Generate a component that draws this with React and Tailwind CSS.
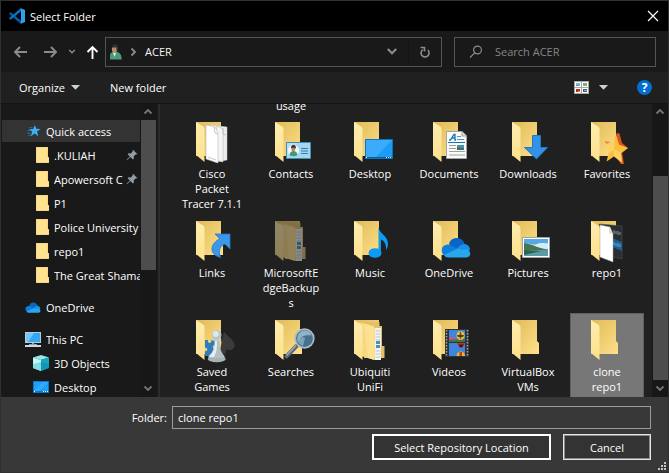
import React from "react";

const FONT = "font-['Open_Sans','Noto_Sans',sans-serif]";

function Chevron({ dir = "down", className = "h-[10px] w-[10px]" }) {
  const d = { down: "M1.5 2.5 5 6l3.5-3.5", up: "M1.5 6.5 5 3l3.5 3.5", right: "M3.5 1.5 7 5 3.5 8.5" }[dir];
  return (
    <svg className={className} viewBox="0 0 10 10" fill="none" stroke="currentColor" strokeWidth="1.8">
      <path d={d} />
    </svg>
  );
}

function Arrow({ dir }) {
  const d = {
    left: "M14 7H2M7 2 2 7l5 5",
    right: "M1 7h12M8 2l5 5-5 5",
    up: "M7.500 14V2M2.500 7l5-5 5 5",
  }[dir];
  return (
    <svg className="h-[14px] w-[15px]" viewBox="0 0 15 14" fill="none" stroke="currentColor" strokeWidth="1.9">
      <path d={d} />
    </svg>
  );
}

function CodeLogo() {
  return (
    <svg className="h-4 w-4" viewBox="0 0 16 16">
      <path d="M.3 5.2 1.600 4.200 12 12.800V15.900L.4 6z" fill="#0065a9" />
      <path d="M.3 10.800 1.600 11.800 12 3.200V.1L.4 10z" fill="#007acc" />
      <path d="M11.400.1 16 2v12l-4.600 1.900c.4-.3.6-.7.6-1.200V1.300c0-.5-.2-.9-.6-1.200z" fill="#2da0ee" />
    </svg>
  );
}

function PersonIcon() {
  return (
    <svg className="h-4 w-[14px]" viewBox="0 0 14 16">
      <path d="M1 15.500V11c0-2 2-3 3.500-3.300L8 8c2.500.5 4.500 2 4.700 7.500z" fill="#4a9b78" />
      <path d="M4 8.500 5.500 13l1.500-4z" fill="#e8eeea" />
      <ellipse cx="5.600" cy="5.200" rx="2.700" ry="3.600" fill="#b98d6c" />
      <path d="M2.800 4C2.600 1.500 4.300.2 6.300.2s3.400 1.600 2.500 5c-.3 1-.8 1.500-1.200 1.700L7.300 3.300C5.500 3.700 4 3.200 2.800 4z" fill="#2f2f31" />
    </svg>
  );
}

function Caret() {
  return (
    <svg className="h-[5px] w-[9px]" viewBox="0 0 9 5" fill="#d0d0d0">
      <path d="M0 0h9L4.500 4.700z" />
    </svg>
  );
}

function ViewIcon() {
  return (
    <svg className="h-[13px] w-[15px]" viewBox="0 0 15 13">
      <path fill="#a7a7a7" d="M0 0h15v13H0z" />
      <path fill="#fff" d="M1 1h6v5H1zM8 1h6v5H8zM1 7h6v5H1zM8 7h6v5H8z" />
      <path fill="#7db8dc" d="M2 2h4v3H2z" /><path fill="#46a46a" d="M2 4h2v1H2z" />
      <path fill="#7bb56c" d="M9 2h4v3H9z" /><path fill="#709bd1" d="M9 2h2v1H9z" />
      <path fill="#b82717" d="M2 8h4v3H2z" /><path fill="#ed9334" d="M4 10h2v1H4z" />
      <path fill="#2d5eac" d="M9 8h4v3H9z" /><path fill="#c7b12d" d="M10 9h3v1h-3z" />
    </svg>
  );
}

function SmallFolder() {
  return (
    <svg className="h-4 w-[13px]" viewBox="0 0 13 16">
      <path d="M0 0h12v10h1v6H0z" fill="#f0cf66" />
      <path d="M.5.500h11V11l-.8 1v3.500H.5z" fill="#ffe391" />
      <path d="M10.800 15.500V12l.7-1h1v4.500z" fill="#ffe9a6" />
    </svg>
  );
}

function QuickStar() {
  return (
    <svg className="h-[14px] w-[14px]" viewBox="0 0 15 14">
      <path d="m8.500.5 1.400 4.200 4.600.1-3.700 2.700L12 12.500 8.200 9.800 4 12.900l1.600-4.800L2.300 5l4.300-.2z" fill="#39b0f5" />
      <path d="M2 3.500h4M.5 6.500h4M0 9.500h4.500M1.500 11.800H4" stroke="#2277ad" strokeWidth="1" />
    </svg>
  );
}

function Pin() {
  return (
    <svg className="h-3 w-3 shrink-0" viewBox="0 0 12 12">
      <path d="m7 .8 4.300 4.300-1 .5-.6-.2-1.900 1.900.1 2.200-.9.9L4.400 7.900 1 11.200l-.4-.4L3.900 7.500 1.700 5.200l.9-.9 2.200.1 1.900-1.900-.2-.7z" fill="#929ca3" />
    </svg>
  );
}

function CloudShape() {
  return (
    <>
      <path d="M8 7c1-4 4-6 8-6 4 0 6.500 2.500 7.500 6L15 15z" fill="#0a66c2" />
      <path d="M3.500 18.500C-.5 15.500-.5 9 5.500 7.800c1-.4 3-.4 4.500.4L18 12.500 8 20z" fill="#0f7fdd" />
      <path d="M16 12c2-3.500 5-5 7.500-5 4 .5 5.500 3.500 5.500 6l-5 3z" fill="#1690e8" />
      <path d="M3 18 17 11.500c3 .8 5 2 8 .8 5 .5 6 7.700.5 8.200H7c-2 0-3-.8-4-2.500z" fill="#28a8ea" />
    </>
  );
}

function OneDriveSmall() {
  return (
    <svg className="h-[11px] w-4" viewBox="0 0 30 21"><CloudShape /></svg>
  );
}

function PcIcon() {
  return (
    <svg className="h-[15px] w-4" viewBox="0 0 16 15">
      <path fill="#b9cbd6" d="M0 0h16v11H0z" />
      <path fill="#34a7f2" d="M1 1h14v9H1z" />
      <path fill="#73c6fb" d="M1 1h8L3 10H1z" />
      <path fill="#92a4b1" d="M7 11h2v1H7zM4 12h8v1H4z" />
      <path fill="#cfd8de" d="M0 13h16v2H0z" />
    </svg>
  );
}

function CubeIcon() {
  return (
    <svg className="h-4 w-4" viewBox="0 0 16 16">
      <path fill="#8fe8ef" d="m8 0 8 2.500L8 5 0 2.500z" />
      <path fill="#c8f6f4" d="m0 2.500 8 2.500v11l-8-3z" />
      <path fill="#7fe0e4" d="m0 9 8-2v9l-8-3z" />
      <path fill="#18a5c0" d="M16 2.500 8 5v11l8-3z" />
      <path fill="#0e8aa8" d="m16 9-8-2v9l8-3z" opacity=".5" />
    </svg>
  );
}

function DesktopSmall() {
  return (
    <svg className="h-[12px] w-4" viewBox="0 0 16 12">
      <path fill="#0978cf" d="M0 0h16v12H0z" />
      <path fill="#1ea0fb" d="M1 1h14v9H1z" />
      <path fill="#4cb5fc" d="M1 10 10 1h5L6 10z" opacity=".5" />
      <path fill="#fff" d="M1 10h1v1H1zM10 10h1v1h-1zM12 10h1v1h-1zM14 10h1v1h-1z" />
    </svg>
  );
}

const overlays = {
  papers: (
    <>
      <path d="m22 7 17 2v33l-12 2z" fill="#ececec" stroke="#c9c9c9" strokeWidth=".5" />
      <path d="m29 8 6 3v33l-12-3z" fill="#f5f5f5" stroke="#bdbdbd" strokeWidth=".6" />
      <path d="m18 7 9 2 3 6v30l-12-4z" fill="#fff" stroke="#bbb" strokeWidth=".6" />
      <path d="m26 9 1 6 3 1M35 10v6l3 1M20 39l8 3" fill="none" stroke="#b0b0b0" strokeWidth=".7" />
    </>
  ),
  contacts: (
    <>
      <path d="M19.500 24.500h24v16h-24z" fill="#b5def5" stroke="#3f8fb5" />
      <path d="m30 25 13 0v15H20z" fill="#9dcfeb" opacity=".6" />
      <circle cx="26.500" cy="32.500" r="5.500" fill="#f3f8f6" />
      <path d="M22.500 37c.3-3 2-4 4-4s3.700 1 4 4c-2 1.600-6 1.600-8 0z" fill="#3d9c75" />
      <ellipse cx="26.300" cy="31" rx="1.900" ry="2.400" fill="#b98261" />
      <path d="M24 30c0-2 1-3 2.600-3s2.900 1.400 2 4l-1-1.500z" fill="#3b2a22" />
      <path d="M34 30.500h7M34 33h7M34 35.500h7" stroke="#317da6" />
    </>
  ),
  desktop: (
    <>
      <path d="M19.500 21.500h27v19h-27z" fill="#1b9cf7" stroke="#0b73c2" />
      <path d="M20 22h26L30 39H20z" fill="#55b9ff" opacity=".55" />
      <path d="M20 39h26v1H20z" fill="#0c5c9c" />
      <path d="M20 39h1v1h-1zM40 39h1v1h-1zM42 39h1v1h-1zM44 39h1v1h-1z" fill="#fff" />
    </>
  ),
  documents: (
    <>
      <path d="M21.500 13.500H37l4.500 4.500v22.500h-20z" fill="#fafafa" stroke="#a5a5a5" />
      <path d="M37 13.500V18h4.500" fill="#e3e3e3" stroke="#9b9b9b" />
      <path d="M24 22h1.500l3.500-5.500h1V22h1M26.500 20H30" fill="none" stroke="#1477b8" strokeWidth="1.300" />
      <path d="M32 18.500h4M32 21.500h7" stroke="#4b96c6" />
      <path d="M23 24.500h17" stroke="#1477b8" />
      <path d="M24 27.500h7M24 30.500h7M24 33.500h16M24 37h16" stroke="#a0a0a0" />
      <path d="M32 27h7v5h-7z" fill="#4b8fc0" /><path d="m32 29 7 1.500V32h-7z" fill="#3c7848" />
    </>
  ),
  downloads: (
    <path d="M28.500 17.500h8v12h7L32.500 41 20.500 29.500h8z" fill="#3193e8" stroke="#1f78c8" />
  ),
  favorites: (
    <>
      <path d="m33.500 15 3 .5 2.500 9.500 6 5-6 4 2 12h-3l-6-9z" fill="#d9551e" />
      <path d="m33 16 3 10.500 9 3.500-7 5.500L39 45l-8-6.500-7.500 5L26 34l-5-6.500 8-1z" fill="#fbbf3d" />
      <path d="m32 18-1 14-5 3-5-7.500 8-1zM31 31l7 4 1 9-8-6z" fill="#ffd977" opacity=".7" />
      <path d="m21.500 23 6 1-4 2z" fill="#f0803a" />
    </>
  ),
  links: (
    <path d="M27 17h15v15l-5-5c-5 2-7 6-4.500 13.500C26 39 23.500 35 24 31c.5-4 4-7 7.500-9.500z" fill="#3b97e8" stroke="#2379c7" strokeWidth=".8" />
  ),
  backup: (
    <>
      <path d="M17 6h16.500v4H36v20h2.500v12H18z" fill="#e3c068" />
      <path d="M28.500 12H35v32h-6.500z" fill="#f2f2f2" />
      <path d="M29.500 15h5M29.500 18h5M29.500 21h5M29.500 24h5M29.500 35h5M29.500 38h5M29.500 41h5" stroke="#bac6cf" />
      <path d="M30 25h4v3h-4zM30 29h4v3h-4z" fill="#4790bb" />
      <path d="m13 6 13.500 4c1.500.5 2 1 2 2.500V44L15 40z" fill="#f7d780" />
      <path d="m18 7.500 8.500 2.500c1.500.5 2 1 2 2.500V44L22 42z" fill="#ffe192" />
    </>
  ),
  music: (
    <>
      <path d="M32.500 10c1 7 9.500 8.500 9.500 17 0 2.500-.8 4.500-2 6 .5-6-2-9.500-5-10.500V36h-2.500z" fill="#0b9bf2" />
      <ellipse cx="29" cy="36" rx="6.500" ry="4.800" fill="#0b9bf2" />
    </>
  ),
  onedrive: <g transform="translate(16 20)"><CloudShape /></g>,
  pictures: (
    <>
      <path d="M18.500 20.500h27v20h-27z" fill="#fff" stroke="#9ba5ab" />
      <path d="M20 22h24v17H20z" fill="#59a8e4" />
      <path d="M20 27c5-2 9 2 13 0s8 0 11-1v6H20z" fill="#d5ebf7" />
      <path d="M20 26c8 1 14 5 21 6l3 1H20z" fill="#45764f" />
      <path d="M20 33h24v6H20z" fill="#5a9ca1" /><path d="m20 33 17 1-17 4z" fill="#315f52" />
    </>
  ),
  repo: (
    <>
      <path d="m16 7 23 2v33l-12-3z" fill="#292e33" stroke="#4b5054" strokeWidth=".6" />
      <path d="m29 21 10 4v9l-10-4z" fill="#1d5f91" />
      <path d="M31 13v4M33 14v3M35 14v4M37 15v3" stroke="#8b9297" />
      <path d="M31 25v3M33 26v3M35 26v4M37 27v3" stroke="#60a8d8" />
      <path d="m17 8 10 2 3 7v28l-13-5z" fill="#fff" stroke="#aaa" strokeWidth=".5" />
      <path d="M26 10v6l4 2z" fill="#e2dfc8" />
    </>
  ),
  games: (
    <>
      <path d="M36 15.500c2 4 10.500 8 10.500 13.500 0 5-5 6.500-8 4l-1 5h-6l2-12z" fill="#3b3b3c" />
      <path d="M17 24h3c-1 4 4 4 3.500 0H27v5c-3 0-3 4 0 4v7H17v-5c3 1 3-4 0-3z" fill="#2d7dbd" />
      <ellipse cx="28.700" cy="43" rx="9" ry="3.300" fill="#a7b2b7" />
      <path d="M26.500 25h5c0 6 1 11 5 15v2h-16v-2c5-4 6-9 6-15z" fill="#b4bfc4" />
      <path d="M27 25h2c0 6 0 11-3 16h-4.500v-1C26 36 27 31 27 25z" fill="#e8edef" />
      <ellipse cx="29" cy="24" rx="4.500" ry="1.300" fill="#c7d0d4" />
      <circle cx="28.700" cy="19" r="4.800" fill="#b9c3c8" />
      <circle cx="27.700" cy="18" r="3" fill="#e1e7e9" />
    </>
  ),
  searches: (
    <>
      <path d="M29.500 30 19.500 40.500" stroke="#556875" strokeWidth="4" strokeLinecap="round" />
      <path d="M29 29.500 19.500 39.500" stroke="#9cabb4" strokeWidth="1.500" />
      <circle cx="37.500" cy="22.500" r="9.300" fill="#47718e" stroke="#a9bdc6" strokeWidth="1.700" />
      <path d="M30.500 25c-1-6 2-10 7-10.500 3 0 6 1 7 5-5-1-10 0-14 5.500z" fill="#90b3c7" />
      <path d="M30 24c1 3 3 5 6 6l2-8-3-1z" fill="#b6d5dd" opacity=".5" />
    </>
  ),
  videos: (
    <>
      <path d="M20 13h24v28H20z" fill="#303234" />
      <path d="M21.500 14v27M42.500 14v27" stroke="#a0a5a7" strokeWidth="1.500" strokeDasharray="1.500 1.500" />
      <path d="M24 14h16v12H24zM24 27h16v13H24z" fill="#3d86df" />
      <path d="M24 22c2-2 4-1 5 0s3 1 5 1h6v3H24z" fill="#c8538d" />
      <path d="M24 24c4-1 10 0 16-1v3H24z" fill="#3b7548" />
      <ellipse cx="35.500" cy="19.500" rx="4" ry="4.500" fill="#ecc32a" />
      <path d="M35.500 15c-1.500 2-1.500 6 0 9 1.500-3 1.500-7 0-9z" fill="#c6302d" />
      <path d="M32 19h7l-1 2h-5z" fill="#1d4f3b" />
      <path d="M32 27h8l-2.500 5h-3z" fill="#c82f2d" /><path d="M33.500 28.500H39L37 31h-2z" fill="#20252a" />
      <path d="M31.500 40c0-6 8.500-6 8.500 0z" fill="#e6bc24" /><path d="M34.500 36h2.500v4h-2.500z" fill="#ce352a" />
    </>
  ),
};

function FolderArt({ kind, faded }) {
  const behindFlap = kind === "papers" || kind === "repo" || kind === "backup";
  return (
    <svg className={`mx-auto h-12 w-12 ${faded ? "opacity-50" : ""}`} viewBox="0 0 48 48">
      <defs>
        <linearGradient id="folderBack" x1="0" y1="0" x2="1" y2="1">
          <stop offset="0" stopColor="#dfba57" />
          <stop offset="1" stopColor="#ffe08a" />
        </linearGradient>
        <linearGradient id="folderFlap" x1="0" y1="0" x2="0" y2="1">
          <stop offset="0" stopColor="#ffedb0" />
          <stop offset="1" stopColor="#fde08a" />
        </linearGradient>
      </defs>
      <path d="M8 4h25v21l2 2v11H8z" fill="url(#folderBack)" />
      {behindFlap && overlays[kind]}
      <path d="m8 4 7 4.500c1.200.8 1.500 1.500 1.500 3V44L8 37z" fill="url(#folderFlap)" />
      {!behindFlap && overlays[kind]}
    </svg>
  );
}

const folders = [
  ["Cisco\nPacket\nTracer 7.1.1", "papers"],
  ["Contacts", "contacts"],
  ["Desktop", "desktop"],
  ["Documents", "documents"],
  ["Downloads", "downloads"],
  ["Favorites", "favorites"],
  ["Links", "links"],
  ["MicrosoftE\ndgeBackup\ns", "backup", true],
  ["Music", "music"],
  ["OneDrive", "onedrive"],
  ["Pictures", "pictures"],
  ["repo1", "repo"],
  ["Saved\nGames", "games"],
  ["Searches", "searches"],
  ["Ubiquiti\nUniFi", "backup"],
  ["Videos", "videos"],
  ["VirtualBox\nVMs", "plain"],
  ["clone\nrepo1", "plain"],
];

const quickItems = [
  [".KULIAH", true],
  ["Apowersoft C", true],
  ["P1"],
  ["Police University"],
  ["repo1"],
  ["The Great Shama"],
];

function TreeRow({ icon, label, nested, active, pinned }) {
  return (
    <li className="flex h-6 items-center pl-px">
      <button
        type="button"
        className={`flex h-[22px] w-full min-w-0 items-center gap-[5px] text-left ${nested ? "pl-[31px]" : "pl-[23px]"} ${active ? "bg-[#333333]" : ""}`}
      >
        <span className="flex w-4 shrink-0 items-center justify-end">{icon}</span>
        <span className="min-w-0 flex-1 overflow-hidden whitespace-nowrap">{label}</span>
        {pinned && <span className="-ml-[5px] pr-[2px]"><Pin /></span>}
      </button>
    </li>
  );
}

function ScrollBar({ top, thumb }) {
  return (
    <div className="flex w-4 shrink-0 flex-col items-center bg-[#171717] text-[#767676]">
      <button type="button" aria-label="Scroll up" className="flex h-4 items-center"><Chevron dir="up" /></button>
      <div className={`flex w-full flex-1 flex-col pl-px ${top}`}>
        <div className={`w-full bg-[#4d4d4d] ${thumb}`} />
      </div>
      <button type="button" aria-label="Scroll down" className="flex h-[17px] items-center"><Chevron /></button>
    </div>
  );
}

export default function App() {
  return (
    <div className={`flex h-screen flex-col overflow-hidden border border-[#303030] bg-[#202020] text-[11px] leading-[15px] text-white ${FONT}`}>
      <header className="flex h-[30px] shrink-0 items-center bg-black pr-[9px] pl-2">
        <CodeLogo />
        <h1 className="ml-[5px] flex-1">Select Folder</h1>
        <button type="button" aria-label="Close">
          <svg className="h-3 w-3" viewBox="0 0 12 12" fill="none" stroke="#fff" strokeWidth="1.200"><path d="m1 1 10 10M11 1 1 11" /></svg>
        </button>
      </header>

      <div className="flex h-[41px] shrink-0 items-center bg-[#191919] pr-3 text-[#8c8c8c]">
        <button type="button" aria-label="Back" className="ml-3"><Arrow dir="left" /></button>
        <button type="button" aria-label="Forward" className="ml-[15px]"><Arrow dir="right" /></button>
        <button type="button" aria-label="Recent locations" className="ml-[10px]"><Chevron className="h-2 w-2" /></button>
        <button type="button" aria-label="Up" className="ml-[9px] text-white"><Arrow dir="up" /></button>
        <div className="ml-[5px] flex h-[30px] flex-1 items-center border border-[#555555] pl-[3px]">
          <PersonIcon />
          <Chevron dir="right" className="ml-[5px] h-[10px] w-[10px]" />
          <button type="button" className="ml-[7px] flex-1 text-left text-[#f4f4f4]">ACER</button>
          <button type="button" aria-label="Show history" className="flex h-full w-[27px] items-center border-r border-[#141414] pl-1"><Chevron className="h-3 w-3" /></button>
          <button type="button" aria-label="Refresh" className="flex h-full w-8 items-center justify-center">
            <svg className="h-3 w-3" viewBox="0 0 12 12" fill="none" stroke="currentColor" strokeWidth="1.600">
              <path d="M8.800 4A4 4 0 1 1 3.800 3.600M1.500 1.500h4v4" />
            </svg>
          </button>
        </div>
        <label className="ml-3 flex h-[30px] w-[202px] items-center border border-[#555555] pl-[14px]">
          <svg className="h-[14px] w-[14px]" viewBox="0 0 14 14" fill="none" stroke="currentColor" strokeWidth="1.200">
            <circle cx="8.500" cy="5" r="3.900" /><path d="M5.700 7.800 1 12.500" />
          </svg>
          <input aria-label="Search ACER" placeholder="Search ACER" className="ml-3 min-w-0 flex-1 bg-transparent outline-none placeholder:text-[#858585]" />
        </label>
      </div>

      <div className="flex h-[31px] shrink-0 items-center pr-4 pl-[18px]">
        <button type="button" className="flex items-center gap-[6px]">Organize <Caret /></button>
        <button type="button" className="ml-[30px]">New folder</button>
        <div className="flex-1" />
        <button type="button" aria-label="Change view"><ViewIcon /></button>
        <button type="button" aria-label="More views" className="ml-[10px]"><Caret /></button>
        <button type="button" aria-label="Help" className="ml-[29px] flex h-[15px] w-[15px] items-center justify-center rounded-full bg-[#006fd1] text-xs font-bold">?</button>
      </div>

      <main className="flex min-h-0 flex-1 border-t border-[#141414]">
        <nav aria-label="Folders" className="flex w-[157px] shrink-0 bg-[#191919] pr-[2px]">
          <ul className="min-w-0 flex-1 overflow-hidden pt-[15px]">
            <TreeRow icon={<QuickStar />} label="Quick access" active />
            {quickItems.map(([label, pinned]) => (
              <TreeRow key={label} icon={<SmallFolder />} label={label} pinned={pinned} nested />
            ))}
            <li className="h-2" />
            <TreeRow icon={<OneDriveSmall />} label="OneDrive" />
            <li className="h-2" />
            <TreeRow icon={<PcIcon />} label="This PC" />
            <TreeRow icon={<CubeIcon />} label="3D Objects" nested />
            <TreeRow icon={<DesktopSmall />} label="Desktop" nested />
          </ul>
          <ScrollBar top="justify-start" thumb="h-[150px]" />
        </nav>
        <section aria-label="Files" className="min-w-0 flex-1 overflow-hidden border-l-2 border-[#2b2b2b] pl-[15px]">
          <div className="grid h-[11px] grid-cols-[repeat(auto-fill,74px)] items-start gap-x-[5px]">
            <div className="col-start-2 flex h-[9px] items-end justify-center overflow-hidden">usage</div>
          </div>
          <div className="grid auto-rows-[99px] grid-cols-[repeat(auto-fill,74px)] gap-x-[5px]">
            {folders.map(([name, kind, faded], i) => (
              <button
                key={name}
                type="button"
                className={`flex flex-col border pt-[2px] text-center ${i === folders.length - 1 ? "border-[#5f5f5f] bg-[#777777]" : "border-transparent"}`}
              >
                <FolderArt kind={kind} faded={faded} />
                <span className="w-full whitespace-pre-line">{name}</span>
              </button>
            ))}
          </div>
        </section>
        <ScrollBar top="justify-end" thumb="h-[204px]" />
      </main>

      <footer className="relative flex h-[75px] shrink-0 flex-col gap-[5px] bg-[#383838] pt-[9px] pr-[17px]">
        <div className="flex items-center">
          <label htmlFor="folder" className="w-[171px] pr-[5px] text-right">Folder:</label>
          <input id="folder" defaultValue="clone repo1" className="h-[23px] min-w-0 flex-1 border border-[#9b9b9b] bg-[#383838] px-[5px] outline-none" />
        </div>
        <div className="flex justify-end gap-3">
          <button type="button" className="h-[26px] w-[179px] border-2 border-white bg-[#333333]">Select Repository Location</button>
          <button type="button" className="h-[26px] w-[88px] border border-[#e6e6e6] bg-[#333333] ring-1 ring-[#8a8a8a] ring-inset">Cancel</button>
        </div>
        <svg className="absolute right-[2px] bottom-[2px] h-2 w-2" viewBox="0 0 8 8" fill="#c3c3c3">
          <path d="M6 0h2v2H6zM3 3h2v2H3zM6 3h2v2H6zM0 6h2v2H0zM3 6h2v2H3zM6 6h2v2H6z" />
        </svg>
      </footer>
    </div>
  );
}
